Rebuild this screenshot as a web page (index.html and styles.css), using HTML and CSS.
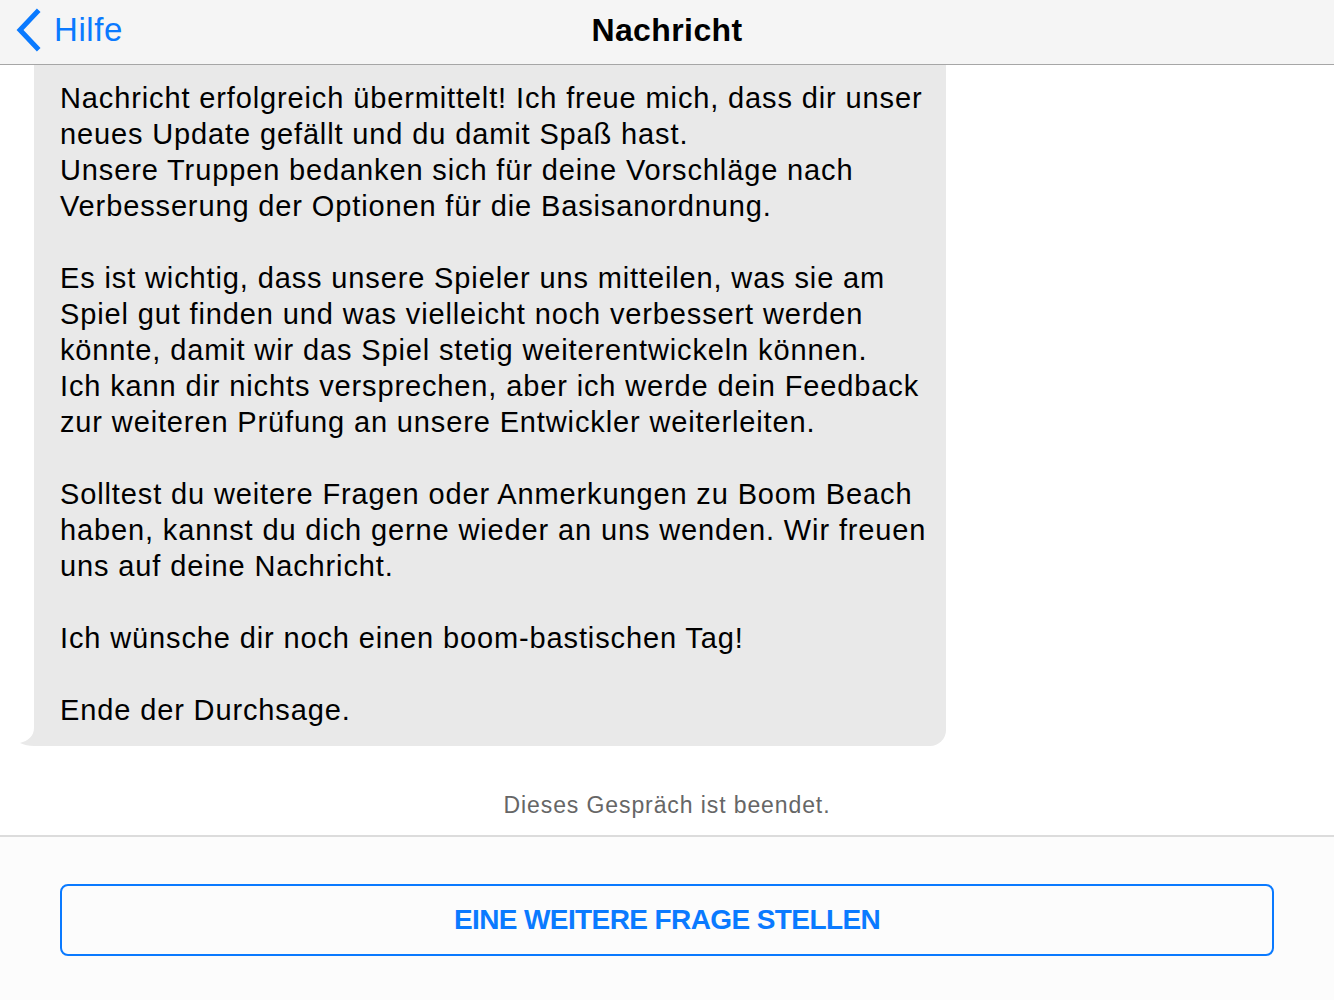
FILE: index.html
```html
<!DOCTYPE html>
<html lang="de">
<head>
  <meta charset="UTF-8" />
  <title>Nachricht</title>
  <link rel="stylesheet" href="styles.css">
</head>
<body>

  <!-- Navigation -->
  <header class="navbar">
    <a class="back" href="#">
      <svg class="chevron" width="28" height="44" viewBox="0 0 28 44">
        <path d="M23 4 L6 22 L23 40" fill="none" stroke="#0a7aff" stroke-width="5" stroke-linecap="square" stroke-linejoin="miter"/>
      </svg>
      <span>Hilfe</span>
    </a>
    <h1 class="title">Nachricht</h1>
  </header>

  <!-- Conversation -->
  <main class="thread">
    <div class="bubble">
      <svg class="tail" width="16" height="18" viewBox="0 0 16 18">
        <path d="M14 0 C14 8 8 13 0 15 C4 17 9 18 14 18 L16 18 L16 0 Z" fill="#e9e9e9"/>
      </svg>
      <p>Nachricht erfolgreich übermittelt! Ich freue mich, dass dir unser<br>
      neues Update gefällt und du damit Spaß hast.<br>
      Unsere Truppen bedanken sich für deine Vorschläge nach<br>
      Verbesserung der Optionen für die Basisanordnung.</p>
      <p>Es ist wichtig, dass unsere Spieler uns mitteilen, was sie am<br>
      Spiel gut finden und was vielleicht noch verbessert werden<br>
      könnte, damit wir das Spiel stetig weiterentwickeln können.<br>
      Ich kann dir nichts versprechen, aber ich werde dein Feedback<br>
      zur weiteren Prüfung an unsere Entwickler weiterleiten.</p>
      <p>Solltest du weitere Fragen oder Anmerkungen zu Boom Beach<br>
      haben, kannst du dich gerne wieder an uns wenden. Wir freuen<br>
      uns auf deine Nachricht.</p>
      <p>Ich wünsche dir noch einen boom-bastischen Tag!</p>
      <p>Ende der Durchsage.</p>
    </div>
    <div class="status">Dieses Gespräch ist beendet.</div>
  </main>

  <footer class="actions">
    <button class="ask">EINE WEITERE FRAGE STELLEN</button>
  </footer>

</body>
</html>
```

FILE: styles.css
```css
* {
  box-sizing: border-box;
}

body {
  margin: 0;
  background-color: #ffffff;
  font-family: 'Liberation Sans', Arial, sans-serif;
  color: #000;
  width: 1334px;
  height: 1000px;
  overflow: hidden;
}

.navbar {
  height: 65px;
  background-color: #f5f5f5;
  border-bottom: 1px solid #a6a6a6;
  display: flex;
  align-items: center;
  justify-content: center;
  position: relative;
}

.back {
  position: absolute;
  left: 14px;
  top: 8px;
  display: flex;
  align-items: center;
  gap: 12px;
  color: #0a7aff;
  text-decoration: none;
  font-size: 33px;
  letter-spacing: 0.6px;
}

.title {
  margin: 0;
  font-size: 32px;
  font-weight: bold;
  letter-spacing: 0.4px;
  padding-bottom: 3px;
}

.thread {
  height: 770px;
}

.bubble {
  position: relative;
  width: 912px;
  margin-left: 34px;
  padding: 15px 20px 18px 26px;
  background-color: #e9e9e9;
  border-bottom-right-radius: 16px;
  font-size: 29px;
  letter-spacing: 0.87px;
  line-height: 36px;
  white-space: nowrap;
}

.bubble p {
  margin: 0 0 36px;
}

.bubble p:last-child {
  margin-bottom: 0;
}

.tail {
  position: absolute;
  left: -14px;
  bottom: 0;
}

.status {
  text-align: center;
  color: #666666;
  font-size: 23px;
  letter-spacing: 0.9px;
  padding-top: 46px;
}

.actions {
  height: 165px;
  background-color: #fcfcfc;
  border-top: 2px solid #dcdcdc;
  padding: 47px 60px 0;
}

.ask {
  width: 100%;
  height: 72px;
  background: transparent;
  border: 2px solid #0a7aff;
  border-radius: 8px;
  color: #0a7aff;
  font-family: 'Liberation Sans', Arial, sans-serif;
  font-size: 28px;
  font-weight: bold;
  letter-spacing: -0.6px;
  cursor: pointer;
}
```
